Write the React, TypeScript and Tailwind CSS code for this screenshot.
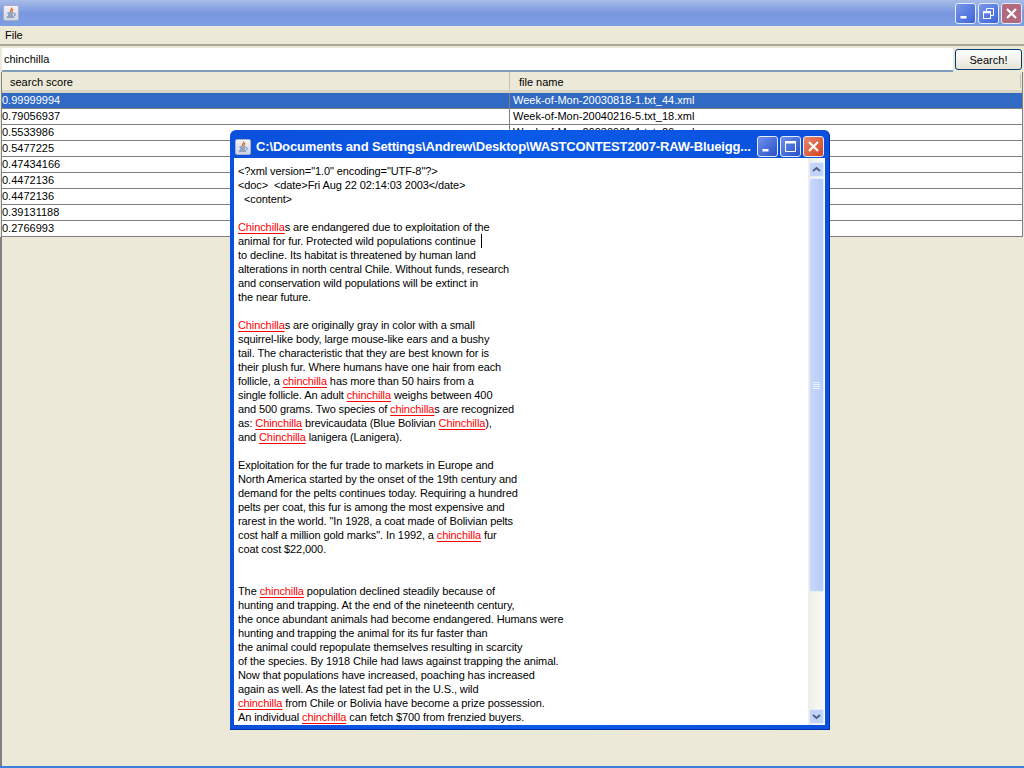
const font = { fontFamily: '"Liberation Sans", Arial, sans-serif' };

function H({ children }: { children: React.ReactNode }) {
  return <span className="text-[#ff0000] underline decoration-[#ff0000] underline-offset-[2px]">{children}</span>;
}

function JavaIcon() {
  return (
    <span className="w-[16px] h-[16px] shrink-0 bg-gradient-to-b from-[#f4f4f8] to-[#cfd3e2] border border-[#aab0c8] rounded-[2px] flex items-center justify-center">
      <svg width="12" height="12" viewBox="0 0 12 12" fill="none">
        <path d="M6.5 0.5C7.5 2 4.5 3 5.5 5M8 2C7 3 6.5 4 7.5 5" stroke="#e2641a" strokeWidth="1.1" />
        <path d="M2.5 6H8.5M3 8H8M2 10H9" stroke="#4a6a9a" strokeWidth="1.1" />
        <path d="M9 6.5C11 6.5 11 8.5 9 8.8" stroke="#4a6a9a" strokeWidth="0.8" />
      </svg>
    </span>
  );
}

function CaptionButton({ kind, tone }: { kind: "min" | "restore" | "max" | "close"; tone: "blue" | "red" | "dimBlue" | "dimRed" }) {
  const bg =
    tone === "red"
      ? "bg-gradient-to-br from-[#e8876a] to-[#d2401c]"
      : tone === "dimRed"
        ? "bg-[#b2687f]"
        : tone === "dimBlue"
          ? "bg-gradient-to-br from-[#7a98e8] to-[#3f62d8]"
          : "bg-gradient-to-br from-[#6f90ec] to-[#2a50c8]";
  return (
    <span className={`w-[21px] h-[21px] rounded-[3px] border border-[#e4ebfa] flex items-center justify-center shrink-0 ${bg}`}>
      <svg width="15" height="15" viewBox="0 0 15 15" fill="none" stroke="#fff">
        {kind === "min" && <rect x="2.5" y="10" width="6" height="2.5" fill="#fff" stroke="none" />}
        {kind === "max" && (
          <>
            <rect x="2.5" y="2.5" width="10" height="10" strokeWidth="1" />
            <path d="M2.5 3.5H12.5" strokeWidth="2" />
          </>
        )}
        {kind === "restore" && (
          <>
            <rect x="2.5" y="5.5" width="7" height="7" strokeWidth="1" />
            <path d="M2.5 6.5H9.5" strokeWidth="1.5" />
            <path d="M5.5 5V2.5H12.5V9.5H10" strokeWidth="1" />
          </>
        )}
        {kind === "close" && <path d="M3 3L12 12M12 3L3 12" strokeWidth="2.2" />}
      </svg>
    </span>
  );
}

const rows = [
  ["0.99999994", "Week-of-Mon-20030818-1.txt_44.xml"],
  ["0.79056937", "Week-of-Mon-20040216-5.txt_18.xml"],
  ["0.5533986", "Week-of-Mon-20030901-1.txt_26.xml"],
  ["0.5477225", ""],
  ["0.47434166", ""],
  ["0.4472136", ""],
  ["0.4472136", ""],
  ["0.39131188", ""],
  ["0.2766993", ""],
];

const doc: React.ReactNode[] = [
  '<?xml version="1.0" encoding="UTF-8"?>',
  "<doc>\u00a0\u00a0<date>Fri Aug 22 02:14:03 2003</date>",
  "\u00a0\u00a0<content>",
  "",
  <><H>Chinchilla</H>s are endangered due to exploitation of the</>,
  <>animal for fur. Protected wild populations continue <span className="inline-block w-px h-[14px] bg-black align-top ml-[2px]" /></>,
  "to decline. Its habitat is threatened by human land",
  "alterations in north central Chile. Without funds, research",
  "and conservation wild populations will be extinct in",
  "the near future.",
  "",
  <><H>Chinchilla</H>s are originally gray in color with a small</>,
  "squirrel-like body, large mouse-like ears and a bushy",
  "tail. The characteristic that they are best known for is",
  "their plush fur. Where humans have one hair from each",
  <>follicle, a <H>chinchilla</H> has more than 50 hairs from a</>,
  <>single follicle. An adult <H>chinchilla</H> weighs between 400</>,
  <>and 500 grams. Two species of <H>chinchilla</H>s are recognized</>,
  <>as: <H>Chinchilla</H> brevicaudata (Blue Bolivian <H>Chinchilla</H>),</>,
  <>and <H>Chinchilla</H> lanigera (Lanigera).</>,
  "",
  "Exploitation for the fur trade to markets in Europe and",
  "North America started by the onset of the 19th century and",
  "demand for the pelts continues today. Requiring a hundred",
  "pelts per coat, this fur is among the most expensive and",
  'rarest in the world. "In 1928, a coat made of Bolivian pelts',
  <>cost half a million gold marks". In 1992, a <H>chinchilla</H> fur</>,
  "coat cost $22,000.",
  "",
  "",
  <>The <H>chinchilla</H> population declined steadily because of</>,
  "hunting and trapping. At the end of the nineteenth century,",
  "the once abundant animals had become endangered. Humans were",
  "hunting and trapping the animal for its fur faster than",
  "the animal could repopulate themselves resulting in scarcity",
  "of the species. By 1918 Chile had laws against trapping the animal.",
  "Now that populations have increased, poaching has increased",
  "again as well. As the latest fad pet in the U.S., wild",
  <><H>chinchilla</H> from Chile or Bolivia have become a prize possession.</>,
  <>An individual <H>chinchilla</H> can fetch $700 from frenzied buyers.</>,
];

export default function App() {
  return (
    <div className="relative w-[1024px] h-[768px] overflow-hidden bg-[#ece9d8] text-[11px] text-black flex flex-col" style={font}>
      {/* main title bar */}
      <div className="h-[26px] shrink-0 bg-gradient-to-b from-[#a8bce8] via-[#7a98e0] to-[#7e9de2] flex items-center pl-[3px] pr-[2px] gap-[2px]">
        <JavaIcon />
        <span className="flex-1" />
        <CaptionButton kind="min" tone="dimBlue" />
        <CaptionButton kind="restore" tone="dimBlue" />
        <CaptionButton kind="close" tone="dimRed" />
      </div>
      {/* menu */}
      <div className="h-[20px] shrink-0 flex items-center pl-[5px] border-b-2 border-[#aca899]">File</div>
      {/* search */}
      <div className="h-[26px] shrink-0 flex pl-[2px] pr-[2px] pt-[2px]">
        <div className="flex-1 bg-white border-b-[2px] border-[#7f9db9] pl-[2px] leading-[22px] text-[11px]">chinchilla</div>
        <button className="w-[67px] h-[21px] mt-px ml-[2px] rounded-[3px] border border-[#003c74] bg-gradient-to-b from-white to-[#e6e3d8] text-[11px] leading-[18px]">Search!</button>
      </div>
      {/* table */}
      <div className="ml-[1px] mr-[1px] border-l border-r border-[#808080]">
        <div className="h-[21px] flex border-b-[3px] border-b-[#d8d4c4] leading-[20px]">
          <div className="w-[508px] pl-[8px] border-r border-[#c5c2b2]">search score</div>
          <div className="flex-1 pl-[9px] relative">
            file name
            <span className="absolute right-[1px] top-[2px] h-[14px] w-px bg-[#c5c2b2]" />
          </div>
        </div>
        {rows.map(([score, name], i) => (
          <div key={i} className={`h-[16px] flex leading-[15px] border-b border-[#808080] ${i === 0 ? "bg-[#316ac5] text-white" : "bg-white"}`}>
            <div className="w-[508px] border-r border-[#808080]">{score}</div>
            <div className="flex-1 pl-[3px]">{name}</div>
          </div>
        ))}
      </div>
      <div className="flex-1 border-l-2 border-[#808080]" />
      <div className="h-[2px] shrink-0 bg-[#3a7fdc]" />

      {/* document window */}
      <div className="absolute left-[230px] top-[130px] w-[600px] h-[600px] rounded-t-[6px] bg-gradient-to-r from-[#0a50dc] via-[#0a5ae8] to-[#0a50dc] flex flex-col border-r border-b border-[#0030a8]">
        <div className="h-[28px] shrink-0 flex items-center pt-[5px] pl-[5px] pr-[5px] gap-[2px]">
          <JavaIcon />
          <span className="flex-1 min-w-0 ml-[3px] text-white font-bold text-[13px] tracking-[-0.15px] whitespace-nowrap">
            C:\Documents and Settings\Andrew\Desktop\WASTCONTEST2007-RAW-Blueigg...
          </span>
          <CaptionButton kind="min" tone="blue" />
          <CaptionButton kind="max" tone="blue" />
          <CaptionButton kind="close" tone="red" />
        </div>
        <div className="flex-1 min-h-0 flex bg-white ml-[4px] mr-[4px] mb-[4px]">
          <div className="flex-1 overflow-hidden pl-[4px] pt-[6px] leading-[14px] tracking-[-0.1px]">
            {doc.map((line, i) => (
              <div key={i} className="h-[14px] whitespace-nowrap">{line}</div>
            ))}
          </div>
          {/* scrollbar */}
          <div className="w-[17px] shrink-0 bg-gradient-to-r from-[#f0efe6] to-[#fbfbf7] flex flex-col items-center pt-[4px]">
            <div className="w-[15px] h-[15px] shrink-0 bg-[#c3d4fb] border border-[#e6eefc] rounded-[2px] flex items-center justify-center">
              <svg width="9" height="7" viewBox="0 0 9 7" fill="none"><path d="M1 5L4.5 2L8 5" stroke="#4d6185" strokeWidth="2" /></svg>
            </div>
            <div className="w-[15px] h-[414px] shrink-0 mt-px bg-gradient-to-r from-[#c9d8fc] to-[#b7cbf8] border border-[#e6eefc] rounded-[2px] flex flex-col items-center justify-center gap-px">
              <span className="w-[7px] h-px bg-[#eef4ff]" />
              <span className="w-[7px] h-px bg-[#eef4ff]" />
              <span className="w-[7px] h-px bg-[#eef4ff]" />
              <span className="w-[7px] h-px bg-[#eef4ff]" />
            </div>
            <span className="flex-1" />
            <div className="w-[15px] h-[15px] shrink-0 mb-px bg-[#c3d4fb] border border-[#e6eefc] rounded-[2px] flex items-center justify-center">
              <svg width="9" height="7" viewBox="0 0 9 7" fill="none"><path d="M1 2L4.5 5L8 2" stroke="#4d6185" strokeWidth="2" /></svg>
            </div>
          </div>
        </div>
      </div>
    </div>
  );
}
